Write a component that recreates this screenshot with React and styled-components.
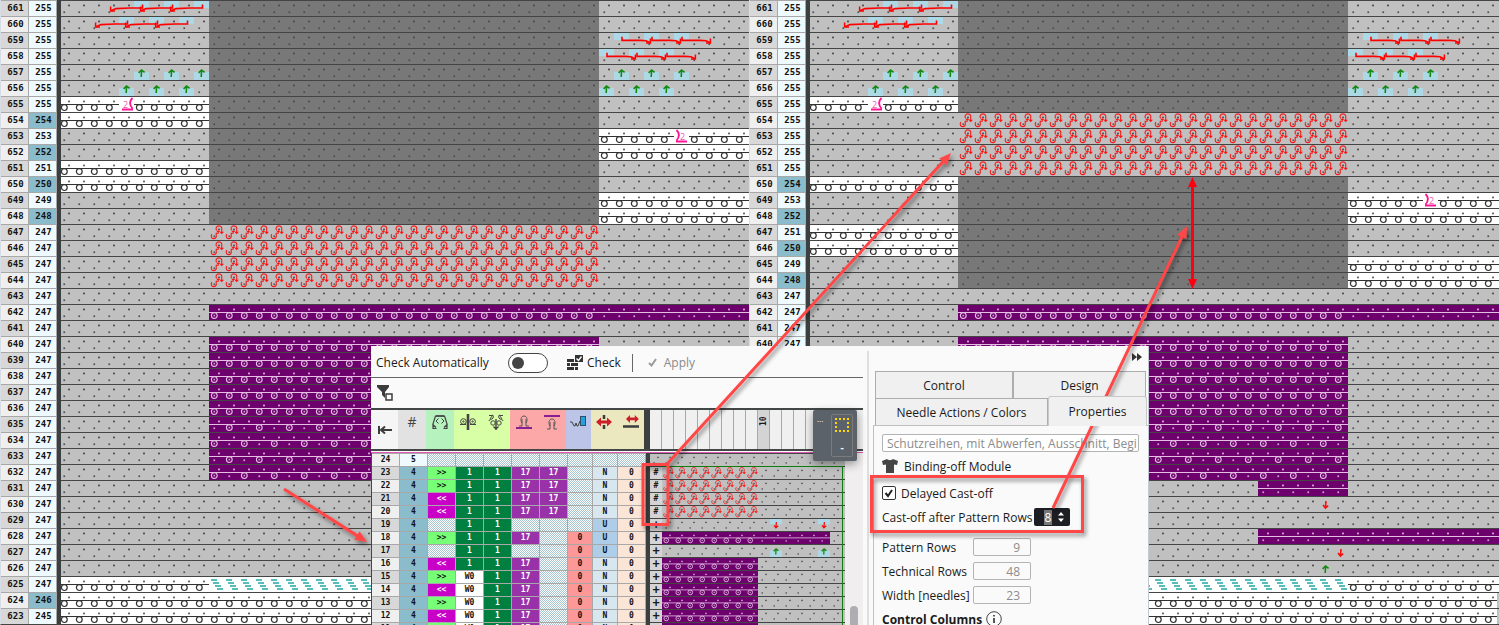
import React, { useState } from 'react'
import styled, { createGlobalStyle, css } from 'styled-components';

const GlobalStyle = createGlobalStyle`
  * {
    box-sizing: border-box;
  }
  body {
    margin: 0;
    background: #c0c0c0;
    font-family: 'Open Sans', 'Noto Sans', sans-serif;
    font-size: 12px;
    color: #1a1a1a;
    overflow: hidden;
  }
  table {
    border-collapse: separate;
    border-spacing: 0;
    table-layout: fixed;
  }
  th, td {
    padding: 0;
  }
  svg {
    display: block;
  }
`;

/* ---------- stitch symbols ---------- */

const Defs = styled.svg`
  position: absolute;
  width: 0;
  height: 0;
`;

const Dots = ({ color, upper = true, lower = true }) => (
  <g fill={color}>
    {upper && <rect x='9' y='4.6' width='2' height='1.7' />}
    {lower && <rect x='4.4' y='11.4' width='1.7' height='1.7' />}
  </g>
)

const Loop = () => (
  <g fill='none' stroke='#fa1414' strokeWidth='1.1'>
    <path d='M7.600 6.400C6.200 4 7.600 1.900 9.900 1.900s3.400 2 2.800 4V8.600' />
    <path d='M10.400 7.800h4.600l-2.300 2.400z' fill='#fa1414' stroke='none' />
    <path d='M2.900 10.200c-1.400 1.800-.6 4.400 1.700 4.400s3-1.600 2.600-3.400V9.200h2V7.200' />
    <path d='M7.400 8L9.300 6l1.900 2z' fill='#fa1414' stroke='none' />
  </g>
)

const PurpleRing = () => (
  <g>
    <circle cx='5.3' cy='11.6' r='2.9' fill='none' stroke='#e3bfe3' strokeWidth='1.1' />
    <rect x='4.5' y='10.8' width='1.6' height='1.6' fill='#c9a0c9' />
  </g>
)

const stitches = {
  gray: { bg: '#c0c0c0', body: <Dots color='#505050' /> },
  dark: { bg: '#787878', body: <Dots color='#4c4c4c' /> },
  white: {
    bg: '#ffffff',
    body: (
      <>
        <Dots color='#666666' lower={false} />
        <rect y='8' width='15' height='1' fill='#303030' />
        <circle cx='5.3' cy='11.6' r='2.9' fill='#ffffff' stroke='#303030' strokeWidth='1.2' />
      </>
    )
  },
  purple: {
    bg: '#6e006e',
    body: (
      <>
        <Dots color='#cfa5cf' lower={false} />
        <rect y='8' width='15' height='1' fill='#e3bfe3' />
        <PurpleRing />
      </>
    )
  },
  float: {
    bg: '#6e006e',
    body: (
      <>
        <Dots color='#cfa5cf' />
        <rect y='8' width='15' height='1' fill='#e3bfe3' />
      </>
    )
  },
  loop: {
    bg: '#c0c0c0',
    body: (
      <>
        <Dots color='#585858' />
        <Loop />
      </>
    )
  },
  comb: {
    bg: '#ffffff',
    body: (
      <g fill='#58bcbc'>
        <rect x='2' y='3' width='6' height='2' />
        <rect x='4' y='6' width='6' height='2' />
        <rect x='6' y='9' width='6' height='2' />
        <rect x='8' y='12' width='6' height='2' />
      </g>
    )
  }
};

const StitchPatterns = ({ prefix, width, height, offset }) => (
  <>
    {Object.keys(stitches).map(name => (
      <pattern
        key={name}
        id={`${prefix}-${name}`}
        x={offset}
        width={width}
        height={height}
        viewBox='0 0 15 16'
        preserveAspectRatio='none'
        patternUnits='userSpaceOnUse'
      >
        <rect width='15' height='16' fill={stitches[name].bg} />
        {stitches[name].body}
      </pattern>
    ))}
    {['ringFirst', 'ringSecond'].map((name, i) => (
      <pattern
        key={name}
        id={`${prefix}-${name}`}
        x={offset}
        width={width * 2}
        height={height}
        viewBox='0 0 30 16'
        preserveAspectRatio='none'
        patternUnits='userSpaceOnUse'
      >
        <rect width='30' height='16' fill='#6e006e' />
        <rect y='8' width='30' height='1' fill='#e3bfe3' />
        <Dots color='#cfa5cf' lower={i === 1} />
        <g transform='translate(15 0)'><Dots color='#cfa5cf' lower={i === 0} /></g>
        <g transform={i ? 'translate(15 0)' : undefined}><PurpleRing /></g>
      </pattern>
    ))}
  </>
)

const marksBase = {
  left: ['#add8e6', null],
  right: ['#add8e6', null],
  up: ['#c0c0c0', '#add8e6'],
  upPlain: ['#c0c0c0', '#c0c0c0'],
  down: ['#add8e6', '#c0c0c0'],
  downPlain: ['#c0c0c0', '#c0c0c0'],
  rackLeft: ['#ffffff', '#ffffff'],
  rackRight: ['#ffffff', '#ffffff']
};

const MarkBase = ({ kind }) => {
  const [upper, lower] = marksBase[kind];
  return (
    <g>
      <rect y='1' width='15' height='7' fill={upper} />
      {lower && <rect y='8' width='15' height='8' fill={lower} />}
    </g>
  )
}

const Mark = ({ kind }) => {
  switch (kind) {
    case 'left':
      return (
        <g stroke='#ff0000' fill='none'>
          <path d='M8.500 4.500V8H-4L-18 8.600L-23 10.800' strokeWidth='1.600' />
          <path d='M-23.400 6.600V11H-19' strokeWidth='1.500' />
        </g>
      )
    case 'right':
      return (
        <g stroke='#ff0000' fill='none'>
          <path d='M8 4.800v3.600h18l6 .4l4 2' strokeWidth='1.600' />
          <path d='M36.400 6.400v4.600h-4.400' strokeWidth='1.500' />
        </g>
      )
    case 'up':
    case 'upPlain':
      return <path d='M7.2 13l.4-7M4.600 8.800L7.600 6l3 2.400' fill='none' stroke='#128a12' strokeWidth='1.600' />
    case 'down':
    case 'downPlain':
      return <path d='M8 5l-.6 7M5 9l2.4 3l2.8-2.4' fill='none' stroke='#f51010' strokeWidth='1.6' />
    case 'rackLeft':
      return (
        <g>
          <text x='4' y='12' fontSize='9' fill='#ee5aa8'>2</text>
          <path d='M3 13.500h11M13.500 2c-3 3-3 7 0 10.500' fill='none' stroke='#ff1493' strokeWidth='1.800' />
        </g>
      )
    case 'rackRight':
      return (
        <g>
          <text x='6' y='12' fontSize='9' fill='#ee5aa8'>2</text>
          <path d='M2 13.500h11M2.500 2c3 3 3 7 0 10.500' fill='none' stroke='#ff1493' strokeWidth='1.800' />
        </g>
      )
    default:
      return null
  }
}

const CHART = { prefix: 'chart', cell: 15, row: 16, offset: -2 };
const MINI = { prefix: 'mini', cell: 12, row: 13, offset: 0 };

// runs: [[first needle, stitch], ...], marks: [[needle, kind], ...]
const StitchRow = ({ size, runs, marks = [] }) => {
  const place = needle =>
    `translate(${size.offset + needle * size.cell} 0) scale(${size.cell / 15} ${size.row / 16})`;
  return (
    <svg width='100%' height={size.row}>
      {runs.map(([start, name]) => (
        <rect
          key={start}
          x={size.offset + start * size.cell}
          width='100%'
          height={size.row}
          fill={`url(#${size.prefix}-${name})`}
        />
      ))}
      {marks.map(([needle, kind]) => (
        <g key={needle} transform={place(needle)}><MarkBase kind={kind} /></g>
      ))}
      {marks.map(([needle, kind]) => (
        <g key={needle} transform={place(needle)}><Mark kind={kind} /></g>
      ))}
      <rect width='100%' height='1' fill='#444444' />
    </svg>
  )
}

/* ---------- big charts ---------- */

const Page = styled.div`
  position: relative;
  height: 100vh;
  overflow: hidden;
`;

const Charts = styled.div`
  display: grid;
  grid-template-columns: 749fr 750fr;
`;

const ChartTable = styled.table`
  width: 100%;
  border-left: 1px solid #d8dce4;
  border-bottom: 1px solid #444444;
  tr {
    height: 16px;
  }
  th, td {
    height: 16px;
  }
`;

const RowNumber = styled.th`
  border-top: 1px solid #a8a8a8;
  border-right: 1px solid #a8a8a8;
  background: ${p => p.$bg};
  font: bold 9px/15px 'DejaVu Sans Mono', monospace;
  text-align: center;
  padding-left: 2px;
  color: #111111;
`;

const StitchCell = styled.td`
  border-left: ${p => p.$bar || 0}px solid #3c3f3f;
  vertical-align: top;
`;

const three = (a, b, c) => [[0, a], [10, b], [36, c]];

const topRows = [
  [661, 255, three('gray', 'dark', 'gray'), [[5, 'left'], [7, 'left'], [9, 'left']]],
  [660, 255, three('gray', 'dark', 'gray'), [[4, 'left'], [6, 'left'], [8, 'left']]],
  [659, 255, three('gray', 'dark', 'gray'), [[37, 'right'], [39, 'right'], [41, 'right']]],
  [658, 255, three('gray', 'dark', 'gray'), [[36, 'right'], [38, 'right'], [40, 'right']]],
  [657, 255, three('gray', 'dark', 'gray'), [[5, 'up'], [7, 'up'], [9, 'up'], [37, 'up'], [39, 'up'], [41, 'up']]],
  [656, 255, three('gray', 'dark', 'gray'), [[4, 'up'], [6, 'up'], [8, 'up'], [36, 'up'], [38, 'up'], [40, 'up']]],
  [655, 255, three('white', 'dark', 'gray'), [[4, 'rackLeft']]]
];

const middleRows = [
  [643, 247, [[0, 'gray']]],
  [642, 247, three('gray', 'purple', 'float')],
  [641, 247, [[0, 'gray']]],
  [640, 247, three('gray', 'purple', 'gray')],
  [639, 247, three('gray', 'purple', 'gray')],
  [638, 247, three('gray', 'purple', 'gray')],
  [637, 247, three('gray', 'purple', 'gray')],
  [636, 247, three('gray', 'purple', 'gray')],
  [635, 247, three('gray', 'ringSecond', 'gray')],
  [634, 247, three('gray', 'ringFirst', 'gray')],
  [633, 247, three('gray', 'ringSecond', 'gray')],
  [632, 247, three('gray', 'ringFirst', 'gray')]
];

const bottomRows = [
  [625, 247, three('white', 'comb', 'white')],
  [624, 246, [[0, 'white']]],
  [623, 245, [[0, 'white']]]
];

const leftRows = [
  ...topRows,
  [654, 254, three('white', 'dark', 'gray')],
  [653, 253, three('gray', 'dark', 'white'), [[41, 'rackRight']]],
  [652, 252, three('gray', 'dark', 'white')],
  [651, 251, three('white', 'dark', 'gray')],
  [650, 250, three('white', 'dark', 'gray')],
  [649, 249, three('gray', 'dark', 'white')],
  [648, 248, three('gray', 'dark', 'white')],
  ...[647, 646, 645, 644].map(n => [n, 247, three('gray', 'loop', 'gray')]),
  ...middleRows,
  ...[631, 630, 629, 628, 627, 626].map(n => [n, 247, [[0, 'gray']]]),
  ...bottomRows
];

const rightRows = [
  ...topRows,
  ...[654, 653, 652, 651].map(n => [n, 255, three('gray', 'loop', 'gray')]),
  [650, 254, three('white', 'dark', 'gray')],
  [649, 253, three('gray', 'dark', 'white'), [[41, 'rackRight']]],
  [648, 252, three('gray', 'dark', 'white')],
  [647, 251, three('white', 'dark', 'gray')],
  [646, 250, three('white', 'dark', 'gray')],
  [645, 249, three('gray', 'dark', 'white')],
  [644, 248, three('gray', 'dark', 'white')],
  ...middleRows,
  [631, 247, [[0, 'gray'], [30, 'float'], [36, 'gray']]],
  [630, 247, [[0, 'gray']], [[34, 'downPlain']]],
  [629, 247, [[0, 'gray']]],
  [628, 247, [[0, 'gray'], [30, 'float']]],
  [627, 247, [[0, 'gray']], [[35, 'downPlain']]],
  [626, 247, [[0, 'gray']], [[34, 'upPlain']]],
  ...bottomRows
];

const Chart = ({ rows }) => (
  <ChartTable>
    <colgroup>
      <col width='28' />
      <col width='28' />
      <col />
    </colgroup>
    <tbody>
      {rows.map(([technical, pattern, runs, marks]) => (
        <tr key={technical}>
          <RowNumber $bg={technical % 2 ? '#d8d8d8' : '#efefef'}>{technical}</RowNumber>
          <RowNumber $bg={pattern % 2 ? '#effaff' : '#8abccc'}>{pattern}</RowNumber>
          <StitchCell $bar={4}><StitchRow size={CHART} runs={runs} marks={marks} /></StitchCell>
        </tr>
      ))}
    </tbody>
  </ChartTable>
)

/* ---------- module editor window ---------- */

const Editor = styled.section`
  position: absolute;
  top: 346px;
  left: 371px;
  right: 350px;
  bottom: 0;
  display: flex;
  overflow: hidden;
  background: #fafafa;
`;

const Workspace = styled.div`
  position: relative;
  flex: 1;
  min-width: 0;
  margin-right: 4px;
`;

const Toolbar = styled.div`
  display: flex;
  align-items: center;
  height: 32px;
  padding: 2px 0 0 5px;
  border-bottom: 1px solid #666666;
`;

const FilterBar = styled.div`
  display: flex;
  align-items: center;
  height: 32px;
  padding-left: 6px;
  border-bottom: 2px solid #444747;
`;

const SwitchLabel = styled.label`
  display: flex;
  align-items: center;
  justify-content: space-between;
  width: 172px;
  margin-right: 19px;
`;

const Switch = styled.input`
  appearance: none;
  display: flex;
  align-items: center;
  width: 40px;
  height: 20px;
  margin: 0;
  padding: 0 3px;
  border: 1px solid #444444;
  border-radius: 10px;
  background: #ffffff;
  &::before {
    content: '';
    width: 12px;
    height: 12px;
    border-radius: 50%;
    background: #444444;
  }
  &:checked {
    justify-content: flex-end;
  }
`;

const ToolButton = styled.button`
  display: flex;
  align-items: center;
  gap: ${p => p.$gap || 0}px;
  padding: 0;
  border: 0;
  background: none;
  font: inherit;
  color: #1a1a1a;
  &:disabled {
    color: #8a8a8a;
  }
`;

const Divider = styled.div`
  width: 1px;
  height: 18px;
  margin: 0 15px 0 11px;
  background: #666666;
`;

const Heads = styled.div`
  display: flex;
  height: 41px;
  overflow: hidden;
  border-bottom: 2px solid #444747;
`;

const Head = styled.div`
  display: flex;
  justify-content: space-around;
  flex: 0 0 ${p => p.$w}px;
  padding-top: ${p => p.$top || 4}px;
  background: ${p => p.$bg};
  color: #444444;
  font: 14px/16px 'Open Sans', sans-serif;
`;

const NeedleHead = styled.div`
  display: flex;
  justify-content: center;
  flex: 0 0 12px;
  padding-top: 4px;
  border-right: 1px solid #a8a8a8;
  background: ${p => (p.$marked ? '#d4d4d4' : '#f0f0f0')};
  span {
    writing-mode: vertical-rl;
    transform: rotate(180deg);
    height: 12px;
    font: bold 8px/11px 'DejaVu Sans Mono', monospace;
  }
`;

const Sheet = styled.div`
  display: flex;
  margin-top: 1px;
  border-top: 1px solid #e05ab4;
  background: #f0eeee;
`;

const SheetBar = styled.div`
  flex: 0 0 4px;
  background: #3c3f3f;
`;

const ControlTable = styled.table`
  flex: none;
  width: 275px;
  border-left: 1px solid #444747;
`;

const checker = css`
  background: conic-gradient(#a4c4d0 25%, #ffffff 0 50%, #a4c4d0 0 75%, #ffffff 0) 0 0 / 2px 2px;
`;

const cellColors = {
  '>>': ['#78ff78', '#111111'],
  '<<': ['#c800c8', '#ffffff'],
  17: ['#9932a8', '#ffffff'],
  1: ['#008040', '#ffffff'],
  W0: ['#ffffff', '#111111'],
  5: ['#effaff', '#111111'],
  4: ['#8abccc', '#111111'],
  N: ['#d8e6f0', '#111111'],
  U: ['#aecde8', '#111111']
};

const ControlCell = styled.td`
  height: 13px;
  border-top: 1px solid #a8a8a8;
  border-right: 1px solid #a8a8a8;
  font: bold 8px/12px 'DejaVu Sans Mono', monospace;
  text-align: center;
  color: ${p => p.$color};
  background: ${p => p.$bg};
  ${p => p.$empty && checker}
`;

const MiniTable = styled.table`
  flex: none;
  width: 195px;
`;

const MiniSign = styled.td`
  height: 13px;
  border-top: 1px solid #444444;
  background: #d4d4d4;
  font: bold ${p => (p.$plus ? 12 : 8)}px/12px 'DejaVu Sans Mono', monospace;
  text-align: center;
  vertical-align: top;
`;

const Selection = styled.div`
  position: absolute;
  top: 120px;
  left: 291px;
  width: 181px;
  bottom: 0;
  border: solid #107c10;
  border-width: 1px 1px 0 0;
`;

const ScrollThumb = styled.div`
  position: absolute;
  right: 5px;
  bottom: -20px;
  width: 8px;
  height: 39px;
  border-radius: 4px;
  background: #adadb2;
`;

const Palette = styled.div`
  position: absolute;
  top: 64px;
  right: 6px;
  display: flex;
  gap: 8px;
  width: 44px;
  height: 51px;
  padding: 4px;
  border-radius: 2px;
  background: #5b626a;
  box-shadow: 0 3px 10px rgba(0, 0, 0, 0.4);
  color: #ffffff;
  font-size: 8px;
  line-height: 10px;
`;

const PaletteTool = styled.button`
  display: flex;
  flex-direction: column;
  align-items: center;
  justify-content: space-between;
  width: 22px;
  padding: 3px 0;
  border: 1px solid #7c7c7c;
  border-radius: 2px;
  background: none;
  color: #ffffff;
  font: bold 10px/12px 'Open Sans', sans-serif;
  i {
    width: 14px;
    height: 14px;
    border: 2px dotted #ffd800;
  }
`;

const controlRows = [
  [24, '5', '', '', '', '', '', '', '', ''],
  [23, '4', '>>', '1', '1', '17', '17', '', 'N', '0'],
  [22, '4', '>>', '1', '1', '17', '17', '', 'N', '0'],
  [21, '4', '<<', '1', '1', '17', '17', '', 'N', '0'],
  [20, '4', '<<', '1', '1', '17', '17', '', 'N', '0'],
  [19, '4', '', '1', '1', '', '', '', 'U', '0'],
  [18, '4', '>>', '1', '1', '17', '', '0', 'U', '0'],
  [17, '4', '', '1', '1', '', '', '0', 'U', '0'],
  [16, '4', '<<', '1', '1', '17', '', '0', 'N', '0'],
  [15, '4', '>>', 'W0', '1', '17', '', '0', 'N', '0'],
  [14, '4', '<<', 'W0', '1', '17', '', '0', 'N', '0'],
  [13, '4', '>>', 'W0', '1', '17', '', '0', 'N', '0'],
  [12, '4', '<<', 'W0', '1', '17', '', '0', 'N', '0'],
  [11, '4', '>>', 'W0', '1', '17', '', '0', 'N', '0']
];

const controlColor = (row, value, col) => {
  if (col === 0) return [row % 2 ? '#d8d8d8' : '#efefef', '#111111']
  if (value === '0') return [col === 9 ? '#fbe5d6' : '#fc9898', '#111111']
  return cellColors[value] || ['#ffffff', '#111111']
}

const miniRows = [
  [24, '', [[0, 'gray']]],
  ...[23, 22, 21, 20].map(n => [n, '#', [[0, 'loop'], [8, 'gray']]]),
  [19, '+', [[0, 'gray']], [[9, 'down'], [13, 'down']]],
  [18, '+', [[0, 'purple'], [8, 'float'], [14, 'gray']]],
  [17, '+', [[0, 'gray']], [[9, 'up'], [13, 'up']]],
  ...[16, 15, 14, 13, 12, 11].map(n => [n, '+', [[0, 'purple'], [8, 'gray']]])
];

const RedArrow = () => (
  <path d='M0 5.5L5 1v3h6V1l5 4.5L11 10V7H5v3z' fill='#cc1f2a' />
)

const HeaderIcons = () => (
  <Heads>
    <Head $w={27} $bg='#f5f5f5' $top={15}>
      <svg width='15' height='10' stroke='#3c3c3c' fill='none' strokeWidth='2'>
        <path d='M2 1v8M4 5h11M8 1.5L4 5l4 3.5' />
      </svg>
    </Head>
    <Head $w={28} $bg='#e2e2e2'>#</Head>
    <Head $w={28} $bg='#b5f2bd'>
      <svg width='16' height='16' stroke='#444444' fill='none'>
        <path d='M3.500 2h9' strokeWidth='1.800' />
        <path d='M3.500 2L.8 10.500L4 13.500M12.500 2l2.700 8.500L12 13.500M1 11v3.500h3.500M15 11v3.500h-3.500' strokeWidth='1.200' />
        <path d='M6.500 4.500L4 7l2.500 2.500M9.500 4.500L12 7l-2.500 2.500' />
      </svg>
    </Head>
    <Head $w={56} $bg='#d9ffa6'>
      <svg width='16' height='16' stroke='#444444' fill='none'>
        <circle cx='3.400' cy='7.500' r='2.800' />
        <circle cx='12.600' cy='7.500' r='2.800' />
        <circle cx='3.400' cy='7.500' r='.7' />
        <circle cx='12.600' cy='7.500' r='.7' />
        <path d='M0 10.500h6M10 10.500h6' />
        <path d='M8 0v16' strokeWidth='2.600' />
      </svg>
      <svg width='16' height='16' stroke='#444444' fill='none'>
        <path d='M1 1.500h3.500L2 5M1 7c0-2 3-1 4-3s0-3-1-3M15 1.500h-3.500L14 5M15 7c0-2-3-1-4-3s0-3 1-3' />
        <circle cx='5' cy='9' r='2.200' />
        <circle cx='11' cy='9' r='2.200' />
        <path d='M8 5v11M5.500 12.500L8 15l2.500-2.500' strokeWidth='1.400' />
      </svg>
    </Head>
    <Head $w={56} $bg='#fca8a8'>
      <svg width='16' height='16' fill='none'>
        <path d='M3 12h3V9C4 6 5 2 8 2s4 4 2 7v3h3M6 9V5M10 9V5' stroke='#555555' />
        <path d='M0 14h16' stroke='#8a1f94' strokeWidth='2' />
      </svg>
      <svg width='16' height='16' fill='none'>
        <path d='M0 2h16' stroke='#8a1f94' strokeWidth='2' />
        <path d='M3 15h3v-3C4 9 5 5 8 5s4 4 2 7v3h3M6 12V8M10 12V8' stroke='#555555' />
      </svg>
    </Head>
    <Head $w={25} $bg='#bcc4e8'>
      <svg width='17' height='16' fill='none'>
        <path d='M0 8h2l2 4h1l1-3l1 3h1l2-5' stroke='#444444' />
        <rect x='10.500' y='2.500' width='5' height='9' fill='#28a0dc' stroke='#2c5068' />
      </svg>
    </Head>
    <Head $w={53} $bg='#ebe7be'>
      <svg width='16' height='16'>
        <path d='M8 1v4M8 11v4' stroke='#3c3c3c' strokeWidth='2.500' />
        <g transform='translate(0 2.500)'><RedArrow /></g>
      </svg>
      <svg width='16' height='16'>
        <g transform='translate(3 0) scale(.8 .9)'><RedArrow /></g>
        <path d='M0 12.500h16' stroke='#3c3c3c' strokeWidth='2.500' />
      </svg>
    </Head>
    <Head $w={6} $bg='#3c3f3f' />
    {Array.from({ length: 18 }, (_, i) => (
      <NeedleHead key={i} $marked={i === 9}>{i === 9 && <span>10</span>}</NeedleHead>
    ))}
  </Heads>
)

/* ---------- property pages ---------- */

const Splitter = styled.div`
  flex: 0 0 2px;
  margin-top: 5px;
  background: #dedede;
`;

const Side = styled.aside`
  flex: 0 0 280px;
  border-right: 1px solid #c4c8d4;
`;

const SideTop = styled.div`
  display: flex;
  justify-content: flex-end;
  height: 25px;
  padding: 7px 6px 0 0;
`;

const Tabs = styled.div`
  display: flex;
  align-items: flex-end;
  height: 27px;
  padding: 0 ${p => p.$right}px 0 6px;
`;

const Tab = styled.button`
  flex: ${p => p.$share} 1 0;
  height: 27px;
  padding: 0;
  border: 1px solid #adadad;
  border-bottom: 0;
  background: #f0f0f0;
  color: #1a1a1a;
  font: inherit;
  & + & {
    border-left-width: ${p => (p.$active ? 1 : 2)}px;
  }
  ${p => p.$active && css`
    height: 30px;
    border-color: #c8c8c8;
    border-radius: 3px 3px 0 0;
    z-index: 1;
    margin-bottom: -1px;
  `}
`;

const Properties = styled.div`
  height: 220px;
  margin-left: 4px;
  padding: 8px 9px 0 8px;
  border-left: 1px solid #c0c0c0;
  border-top: 1px solid #c0c0c0;
  white-space: nowrap;
`;

const NameInput = styled.input`
  display: block;
  width: 100%;
  height: 18px;
  padding: 0 0 0 4px;
  border: 1px solid #b4b4b4;
  border-radius: 2px;
  background: #ffffff;
  color: #8c8c8c;
  font: inherit;
`;

const Line = styled.div`
  display: flex;
  align-items: center;
  gap: ${p => p.$gap || 0}px;
  height: 24px;
  margin-top: ${p => p.$top || 0}px;
`;

const Tick = styled.input`
  appearance: none;
  width: 14px;
  height: 14px;
  margin: 0;
  border: 1px solid #333333;
  border-radius: 2px;
  background: #ffffff;
  &:checked {
    background: #ffffff url("data:image/svg+xml,%3Csvg xmlns='http://www.w3.org/2000/svg' viewBox='0 0 12 12'%3E%3Cpath d='M2.500 6l2.500 3l4-6' fill='none' stroke='%23222' stroke-width='2'/%3E%3C/svg%3E");
  }
`;

const Spinner = styled.div`
  display: flex;
  align-items: center;
  width: 36px;
  height: 18px;
  border-radius: 2px;
  background: #1c1e24;
  input {
    width: 8px;
    height: 15px;
    margin-left: 10px;
    padding: 0;
    border: 0;
    background: #787878;
    color: #ffffff;
    font: inherit;
    text-align: center;
  }
  svg {
    margin-left: 5px;
  }
`;

const FieldLabel = styled.label`
  flex: 0 0 ${p => p.$w}px;
`;

const ReadOnly = styled.input`
  width: 58px;
  height: 18px;
  padding: 0 10px;
  border: 1px solid #b4b4b4;
  border-radius: 2px;
  background: #fafafa;
  color: #8c8c8c;
  font: inherit;
  text-align: right;
`;

/* ---------- annotations ---------- */

const Annotations = styled.svg`
  position: absolute;
  top: 0;
  left: 0;
  width: 100%;
  height: 100%;
  pointer-events: none;
`;

const Callout = ({ from, to }) => {
  const angle = Math.atan2(to[1] - from[1], to[0] - from[0]);
  const stop = [to[0] - 10 * Math.cos(angle), to[1] - 10 * Math.sin(angle)];
  return (
    <g>
      <path d={`M${from}L${stop}`} stroke='#ff4646' strokeWidth='3' />
      <path
        d='M0 0L-12 -5V5z'
        fill='#ff4646'
        transform={`translate(${to}) rotate(${angle * 180 / Math.PI})`}
      />
    </g>
  )
}

const App = () => {
  const [auto, setAuto] = useState(false);
  const [delayed, setDelayed] = useState(true);
  const [rows, setRows] = useState('8');
  return (
    <Page>
      <GlobalStyle />
      <Defs>
        <defs>
          <StitchPatterns prefix='chart' width={15} height={16} offset={-2} />
          <StitchPatterns prefix='mini' width={12} height={13} offset={0} />
        </defs>
      </Defs>
      <Charts>
        <Chart rows={leftRows} />
        <Chart rows={rightRows} />
      </Charts>

      <Editor>
        <Workspace>
          <Toolbar>
            <SwitchLabel>
              Check Automatically
              <Switch type='checkbox' role='switch' checked={auto} onChange={e => setAuto(e.target.checked)} />
            </SwitchLabel>
            <ToolButton $gap={4}>
              <svg width='16' height='16' fill='#333333'>
                <path d='M0 4h7v3H0zM0 8h3v3H0zM4 8h7v3H4zM0 12h7v3H0zM8 12h3v3H8z' />
                <path d='M8 0h8v7H8z' />
                <path d='M9.500 3.500l2 2l3-4' fill='none' stroke='#ffffff' strokeWidth='1.400' />
              </svg>
              Check
            </ToolButton>
            <Divider />
            <ToolButton $gap={7} disabled>
              <svg width='9' height='9' fill='none' stroke='#9a9a9a' strokeWidth='2'>
                <path d='M1 5l2.500 2.500L8 1' />
              </svg>
              Apply
            </ToolButton>
          </Toolbar>
          <FilterBar>
            <ToolButton aria-label='Filter'>
              <svg width='16' height='16'>
                <path d='M0 0h12v2L8 7v6L5 10V7L0 2z' fill='#3c3c3c' />
                <rect x='9' y='9' width='6' height='6' fill='#fafafa' stroke='#3c3c3c' strokeWidth='1.500' />
              </svg>
            </ToolButton>
          </FilterBar>
          <HeaderIcons />
          <Sheet>
            <ControlTable>
              <colgroup>
                {[28, 28, 28, 28, 28, 28, 28, 25, 25, 28].map((w, i) => <col key={i} width={w} />)}
              </colgroup>
              <tbody>
                {controlRows.map(cells => (
                  <tr key={cells[0]}>
                    {cells.map((value, i) => {
                      const [bg, color] = controlColor(cells[0], value, i);
                      return <ControlCell key={i} $bg={bg} $color={color} $empty={value === ''}>{value}</ControlCell>
                    })}
                  </tr>
                ))}
              </tbody>
            </ControlTable>
            <SheetBar />
            <MiniTable>
              <colgroup>
                <col width='12' />
                <col />
              </colgroup>
              <tbody>
                {miniRows.map(([n, sign, runs, marks]) => (
                  <tr key={n}>
                    {sign && <MiniSign $plus={sign === '+'}>{sign}</MiniSign>}
                    <StitchCell colSpan={sign ? 1 : 2}><StitchRow size={MINI} runs={runs} marks={marks} /></StitchCell>
                  </tr>
                ))}
              </tbody>
            </MiniTable>
          </Sheet>
          <Selection />
          <ScrollThumb />
          <Palette>
            ...
            <PaletteTool><i />-</PaletteTool>
          </Palette>
        </Workspace>

        <Splitter />

        <Side>
          <SideTop>
            <svg width='10' height='8' fill='#333333'><path d='M0 0l5 4l-5 4zM5 0l5 4l-5 4z' /></svg>
          </SideTop>
          <Tabs $right={2}>
            <Tab $share={138}>Control</Tab>
            <Tab $share={133}>Design</Tab>
          </Tabs>
          <Tabs $right={1}>
            <Tab $share={173}>Needle Actions / Colors</Tab>
            <Tab $share={98} $active>Properties</Tab>
          </Tabs>
          <Properties>
            <NameInput aria-label='Module name' readOnly value='Schutzreihen, mit Abwerfen, Ausschnitt, Begi' />
            <Line $gap={6} $top={2}>
              <svg width='16' height='14' fill='#444444'>
                <path d='M5 0c1 1.500 5 1.500 6 0l5 2l-1 4l-3-.500V14H4V5.500L1 6L0 2z' />
              </svg>
              Binding-off Module
            </Line>
            <Line $gap={5} $top={3}>
              <Tick id='delayed' type='checkbox' checked={delayed} onChange={e => setDelayed(e.target.checked)} />
              <label htmlFor='delayed'>Delayed Cast-off</label>
            </Line>
            <Line>
              <FieldLabel $w={152} htmlFor='castoff'>Cast-off after Pattern Rows</FieldLabel>
              <Spinner>
                <input id='castoff' value={rows} onChange={e => setRows(e.target.value)} />
                <svg width='8' height='12' fill='#ffffff'><path d='M1 4.500L4 1l3 3.500zM1 7.500h6L4 11z' /></svg>
              </Spinner>
            </Line>
            <Line $top={6}>
              <FieldLabel $w={91} htmlFor='patternRows'>Pattern Rows</FieldLabel>
              <ReadOnly id='patternRows' readOnly value='9' />
            </Line>
            <Line>
              <FieldLabel $w={91} htmlFor='technicalRows'>Technical Rows</FieldLabel>
              <ReadOnly id='technicalRows' readOnly value='48' />
            </Line>
            <Line>
              <FieldLabel $w={91} htmlFor='needles'>Width [needles]</FieldLabel>
              <ReadOnly id='needles' readOnly value='23' />
            </Line>
            <Line $gap={4}>
              <b>Control Columns</b>
              <svg width='16' height='16' fill='none' stroke='#444444'>
                <circle cx='8' cy='8' r='7.300' />
                <path d='M8 7v5M8 4v1.500' strokeWidth='1.800' />
              </svg>
            </Line>
          </Properties>
        </Side>
      </Editor>

      <Annotations>
        <defs>
          <filter id='shade' x='-10%' y='-10%' width='120%' height='120%'>
            <feDropShadow dx='2' dy='3' stdDeviation='2' floodColor='#000000' floodOpacity='0.45' />
          </filter>
        </defs>
        <g filter='url(#shade)'>
          <g fill='none' stroke='#ff4646' strokeWidth='3'>
            <rect x='643' y='464.500' width='25' height='60' />
            <rect x='871.500' y='476.500' width='211' height='55' />
          </g>
          <Callout from={[667, 464]} to={[951, 153]} />
          <Callout from={[1053, 508]} to={[1187, 226]} />
          <Callout from={[284, 489]} to={[367, 542]} />
        </g>
        <g fill='#ff0010'>
          <path d='M1191 185h3v96h-3z' />
          <path d='M1192.500 177l4.500 10h-9zM1192.500 289l4.500-10h-9z' />
        </g>
      </Annotations>
    </Page>
  )
}

export default App;
